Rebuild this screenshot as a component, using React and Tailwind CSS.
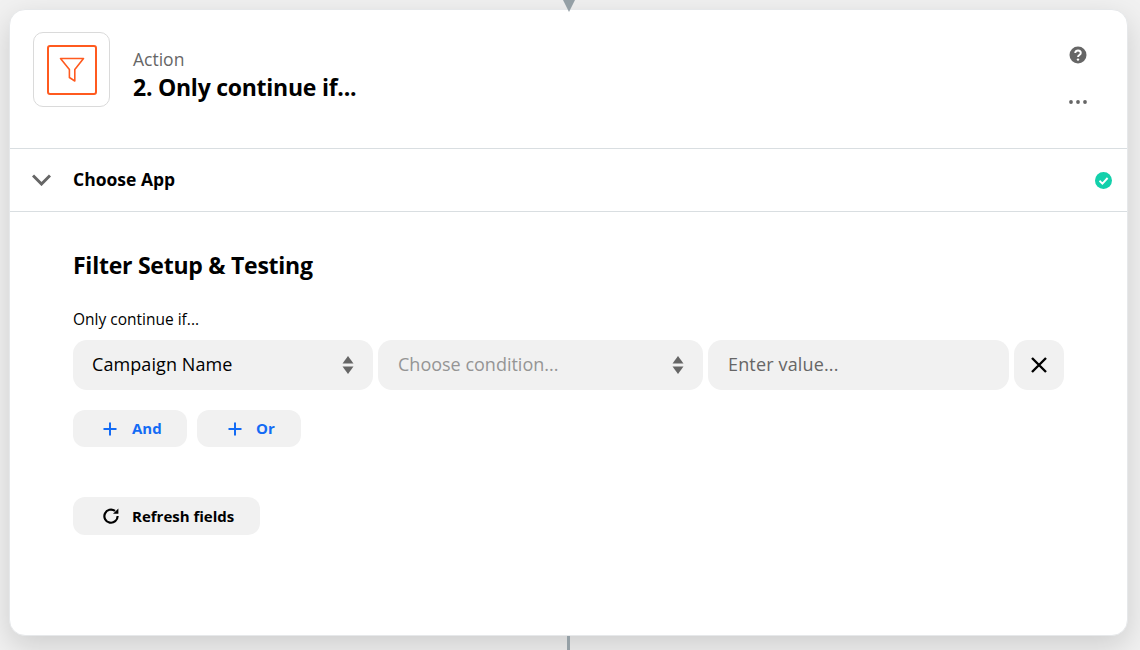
const font = { fontFamily: '"Open Sans", sans-serif' };

function Updown() {
  return (
    <svg width="12" height="20" viewBox="0 0 12 20" className="shrink-0" fill="#666666">
      <path d="M6 1 L11.5 8.5 H0.5 Z" />
      <path d="M6 19 L11.5 11.5 H0.5 Z" />
    </svg>
  );
}

function Plus() {
  return (
    <svg width="14" height="14" viewBox="0 0 14 14" stroke="#136bf5" strokeWidth="2" fill="none">
      <path d="M7 0.5 V13.5 M0.5 7 H13.5" />
    </svg>
  );
}

export default function App() {
  return (
    <div
      className="relative w-[1140px] h-[650px] overflow-hidden bg-[#f1f1f1] pt-[9px] pl-[9px] pr-[12px] pb-[14px]"
      style={font}
    >
      {/* connectors above and below the card */}
      <svg className="absolute left-[562px] top-0" width="14" height="12" viewBox="0 0 14 12" fill="#95a0a6">
        <path d="M1 0 H13 L7 12 Z" />
      </svg>
      <div className="absolute z-10 left-[567px] top-[636px] w-[3px] h-[14px] bg-[#95a0a6]" />

      <div className="h-[627px] rounded-[16px] bg-white border border-[#e6e8ea] shadow-[0_10px_30px_rgba(0,0,0,0.15)] overflow-hidden">
        {/* header */}
        <div className="h-[139px] border-b border-[#d9dee1] flex items-start pl-[23px] pr-[40px] pt-[22px]">
          <div className="w-[77px] h-[75px] rounded-[10px] border border-[#dadada] flex items-center justify-center">
            <div className="w-[50px] h-[50px] rounded-[3px] border-2 border-[#ff5a1f] flex items-center justify-center">
              <svg width="26" height="26" viewBox="0 0 26 26" fill="none" stroke="#ff5a1f" strokeWidth="1.6" strokeLinejoin="round">
                <path d="M1.5 1.5 H24.5 L15.8 12.5 V24 L10.4 20.5 V12.5 Z" />
              </svg>
            </div>
          </div>
          <div className="ml-[23px] mt-[14px]">
            <div className="text-[17.5px] leading-[26px] text-[#666666]">Action</div>
            <div className="text-[23px] leading-[30px] font-bold text-black tracking-[-0.25px]">2. Only continue if...</div>
          </div>
          <div className="ml-auto flex flex-col items-center mt-[14px] gap-[36px]">
            <svg width="18" height="18" viewBox="0 0 18 18">
              <circle cx="9" cy="9" r="8.5" fill="#666666" />
              <path d="M6.2 7 C6.2 3.6 11.8 3.6 11.8 7 C11.8 9 9 9 9 11" fill="none" stroke="#fff" strokeWidth="1.9" />
              <circle cx="9" cy="13.6" r="1.2" fill="#fff" />
            </svg>
            <svg width="18" height="4" viewBox="0 0 18 4" fill="#666666">
              <circle cx="2" cy="2" r="1.9" />
              <circle cx="9" cy="2" r="1.9" />
              <circle cx="16" cy="2" r="1.9" />
            </svg>
          </div>
        </div>

        {/* choose app row */}
        <div className="h-[63px] border-b border-[#d9dee1] flex items-center pl-[22px] pr-[15px]">
          <svg width="19" height="12" viewBox="0 0 19 12" fill="none" stroke="#666666" strokeWidth="3">
            <path d="M1 1.5 L9.5 10 L18 1.5" />
          </svg>
          <span className="ml-[22px] pb-[2px] text-[17.5px] font-bold text-black">Choose App</span>
          <svg className="ml-auto" width="17" height="17" viewBox="0 0 17 17">
            <circle cx="8.5" cy="8.5" r="8.5" fill="#13d0ab" />
            <path d="M4.5 8.8 L7.4 11.6 L12.6 6" fill="none" stroke="#fff" strokeWidth="1.9" />
          </svg>
        </div>

        {/* filter body */}
        <div className="pl-[63px] pt-[38px]">
          <h2 className="text-[23px] leading-[30px] font-bold text-black tracking-[-0.25px]">Filter Setup &amp; Testing</h2>
          <div className="mt-[29px] text-[15.5px] leading-[20px] font-medium text-black">Only continue if...</div>

          <div className="mt-[11px] flex gap-[5px] h-[50px]">
            <div className="w-[300px] rounded-[14px] bg-[#f1f1f1] flex items-center justify-between px-[19px]">
              <span className="pb-[2px] text-[18px] tracking-[0.08px] text-black">Campaign Name</span>
              <Updown />
            </div>
            <div className="w-[325px] rounded-[14px] bg-[#f1f1f1] flex items-center justify-between pl-[20px] pr-[19px]">
              <span className="pb-[2px] text-[18px] text-[#959595]">Choose condition...</span>
              <Updown />
            </div>
            <div className="w-[301px] rounded-[14px] bg-[#f1f1f1] flex items-center pl-[20px]">
              <span className="pb-[1px] text-[18px] tracking-[0.15px] text-[#666666]">Enter value...</span>
            </div>
            <div className="w-[50px] rounded-[14px] bg-[#f1f1f1] flex items-center justify-center">
              <svg width="18" height="18" viewBox="0 0 18 18" fill="none" stroke="#000" strokeWidth="2.4">
                <path d="M2 2 L16 16 M16 2 L2 16" />
              </svg>
            </div>
          </div>

          <div className="mt-[20px] flex gap-[10px]">
            <button className="w-[114px] h-[37px] rounded-[12px] bg-[#f1f1f1] flex items-center pl-[30px] gap-[15px] text-[15px] font-bold text-[#136bf5]">
              <Plus />
              <span>And</span>
            </button>
            <button className="w-[104px] h-[37px] rounded-[12px] bg-[#f1f1f1] flex items-center pl-[31px] gap-[14px] text-[15px] font-bold text-[#136bf5]">
              <Plus />
              <span>Or</span>
            </button>
          </div>

          <button className="mt-[50px] w-[187px] h-[38px] rounded-[12px] bg-[#f1f1f1] flex items-center pl-[30px] gap-[13px] text-[15px] font-bold text-black">
            <svg width="16" height="16" viewBox="0 0 16 16" fill="none" stroke="#000" strokeWidth="2.2">
              <path d="M14.6 8 A6.6 6.6 0 1 1 12 2.9" />
              <path d="M15.4 0.4 V5.8 H10" fill="#000" stroke="none" />
            </svg>
            <span>Refresh fields</span>
          </button>
        </div>
      </div>
    </div>
  );
}
